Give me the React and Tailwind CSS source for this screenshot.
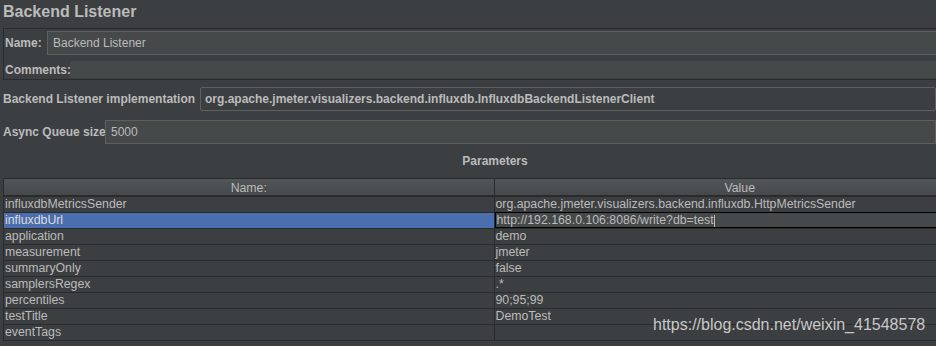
import React from 'react'

const params = [
  ['influxdbMetricsSender', 'org.apache.jmeter.visualizers.backend.influxdb.HttpMetricsSender'],
  ['influxdbUrl', 'http://192.168.0.106:8086/write?db=test'],
  ['application', 'demo'],
  ['measurement', 'jmeter'],
  ['summaryOnly', 'false'],
  ['samplersRegex', '.*'],
  ['percentiles', '90;95;99'],
  ['testTitle', 'DemoTest'],
  ['eventTags', ''],
]

export default function App() {
  return (
    <div
      className="relative w-[936px] h-[346px] overflow-hidden bg-[#3c3f41] text-[#bbbbbb] text-[12px]"
      style={{ fontFamily: '"Liberation Sans", Arial, sans-serif' }}
    >
      {/* title */}
      <div className="h-[28px] pl-[3px] pt-[2px] text-[16px] font-bold leading-[20px]">Backend Listener</div>

      {/* name / comments panel */}
      <div className="ml-[3px] w-[960px] h-[52px] border border-[#2b2b2b] pt-[2px]">
        <div className="flex items-center h-[24px]">
          <span className="pl-[1px] w-[43px] shrink-0 font-bold">Name:</span>
          <div className="flex-1 h-[24px] border border-[#5e6060] bg-[#45494a] pl-[5px] flex items-center">
            Backend Listener
          </div>
        </div>
        <div className="flex items-center h-[17px] mt-[6px]">
          <span className="pl-[1px] w-[66px] shrink-0 font-bold">Comments:</span>
          <div className="flex-1 h-[17px] bg-[#45494a]"></div>
        </div>
      </div>

      {/* implementation */}
      <div className="flex items-center h-[24px] mt-[7px]">
        <span className="pl-[3px] w-[200px] shrink-0 whitespace-nowrap font-bold">Backend Listener implementation</span>
        <div className="flex-1 h-[24px] border border-[#5e6060] rounded-[2px] bg-[#3c3f41] pl-[4px] flex items-center font-bold whitespace-nowrap">
          org.apache.jmeter.visualizers.backend.influxdb.InfluxdbBackendListenerClient
        </div>
      </div>

      {/* async queue */}
      <div className="flex items-center h-[24px] mt-[9px]">
        <span className="pl-[3px] w-[105px] shrink-0 whitespace-nowrap font-bold">Async Queue size</span>
        <div className="flex-1 h-[24px] border border-[#5e6060] bg-[#45494a] pl-[5px] flex items-center">5000</div>
      </div>

      {/* parameters */}
      <div className="h-[34px] flex items-center justify-center pl-[54px] font-bold">Parameters</div>

      <div className="ml-[3px] w-[982px] border-l border-t border-[#2b2b2b] text-[12.3px]">
        <div className="grid grid-cols-2 h-[18px] border-b-2 border-[#2b2b2b] bg-gradient-to-b from-[#515658] to-[#46494b]">
          <div className="flex items-center justify-center border-r border-[#2b2b2b]">Name:</div>
          <div className="flex items-center justify-center">Value</div>
        </div>
        {params.map(([n, v], i) => {
          const sel = i === 1
          return (
            <div key={n} className="grid grid-cols-2 h-[16px] border-b border-[#2b2b2b] leading-[15px] whitespace-nowrap">
              <div className={`pl-[1px] border-r border-[#2b2b2b] ${sel ? 'bg-[#4b6eaf] text-[#dddddd]' : ''}`}>{n}</div>
              {sel ? (
                <div className="pl-[1px] border border-black bg-[#45494a] -mt-[1px] h-[16px] leading-[15px]">
                  {v}
                  <span className="inline-block w-px h-[12px] bg-[#bbbbbb] align-middle"></span>
                </div>
              ) : (
                <div className="pl-[1px]">{v}</div>
              )}
            </div>
          )
        })}
      </div>

      {/* watermark */}
      <div className="absolute left-[653px] top-[315px] text-[16px] text-[#c8c8c8] leading-[20px]">
        https://blog.csdn.net/weixin_41548578
      </div>
    </div>
  )
}
